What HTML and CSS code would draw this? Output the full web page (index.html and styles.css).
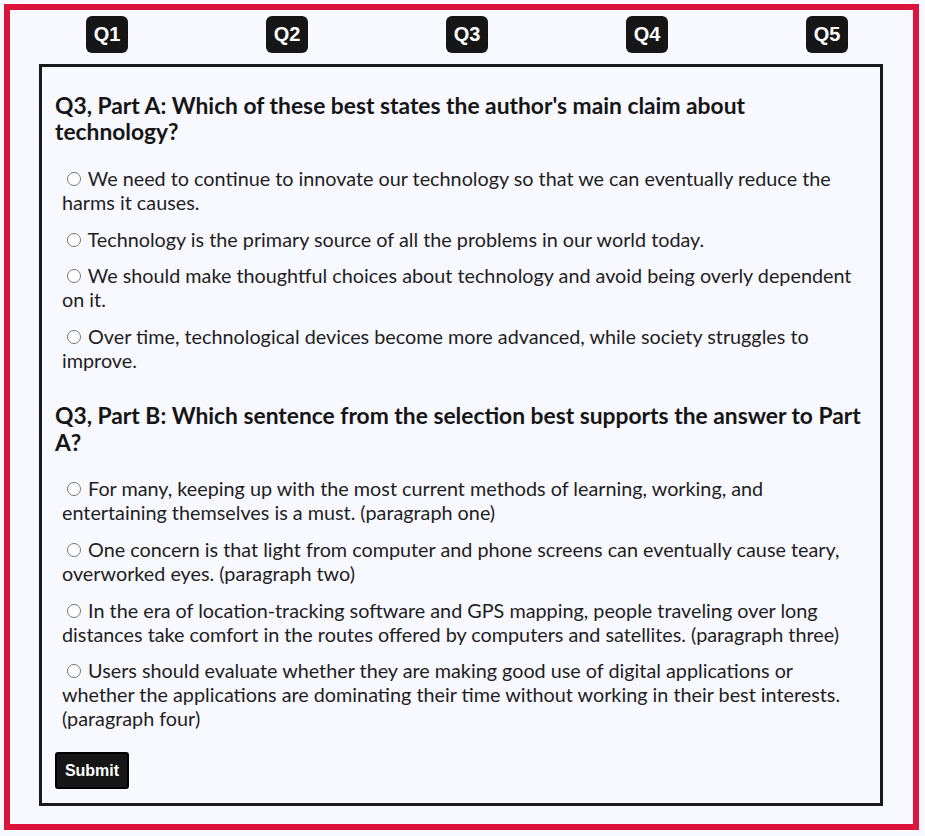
FILE: index.html
```html
<!DOCTYPE html>
<html lang="en">
<head>
<meta charset="utf-8">
<title>Q3</title>
<link rel="stylesheet" href="styles.css">
</head>
<body>
<div class="frame">
  <nav class="qnav">
    <button class="qbtn">Q1</button>
    <button class="qbtn">Q2</button>
    <button class="qbtn">Q3</button>
    <button class="qbtn">Q4</button>
    <button class="qbtn">Q5</button>
  </nav>
  <main class="card">
    <section class="q">
      <h2 class="q-title">Q3, Part A: Which of these best states the author's main claim about technology?</h2>
      <div class="options">
        <label class="opt"><input type="radio" name="partA"> We need to continue to innovate our technology so that we can eventually reduce the harms it causes.</label>
        <label class="opt"><input type="radio" name="partA"> Technology is the primary source of all the problems in our world today.</label>
        <label class="opt"><input type="radio" name="partA"> We should make thoughtful choices about technology and avoid being overly dependent on it.</label>
        <label class="opt"><input type="radio" name="partA"> Over time, technological devices become more advanced, while society struggles to improve.</label>
      </div>
    </section>
    <section class="q">
      <h2 class="q-title">Q3, Part B: Which sentence from the selection best supports the answer to Part A?</h2>
      <div class="options">
        <label class="opt"><input type="radio" name="partB"> For many, keeping up with the most current methods of learning, working, and entertaining themselves is a must. (paragraph one)</label>
        <label class="opt"><input type="radio" name="partB"> One concern is that light from computer and phone screens can eventually cause teary, overworked eyes. (paragraph two)</label>
        <label class="opt"><input type="radio" name="partB"> In the era of location-tracking software and GPS mapping, people traveling over long distances take comfort in the routes offered by computers and satellites. (paragraph three)</label>
        <label class="opt"><input type="radio" name="partB"> Users should evaluate whether they are making good use of digital applications or whether the applications are dominating their time without working in their best interests. (paragraph four)</label>
      </div>
    </section>
    <button class="submit">Submit</button>
  </main>
</div>
</body>
</html>
```
FILE: styles.css
```css
html, body {
  margin: 0;
  background: #f8f8ff;
}

body {
  padding: 4px 6px 6px 4px;
}

.frame {
  box-sizing: border-box;
  height: 826px;
  border: 6px solid #dc143c;
  padding-top: 6px;
}

.qnav {
  display: grid;
  grid-template-columns: repeat(5, 180px);
  justify-items: center;
  padding-left: 7px;
}

.qbtn {
  width: 42px;
  height: 37px;
  padding: 0;
  border: 0;
  border-radius: 6px;
  background: #161616;
  color: #fff;
  font: bold 20px "Liberation Sans", Arial, sans-serif;
}

.card {
  margin: 11px 30px 0 29px;
  border: 3px solid #1a1a1a;
  padding: 25px 13px 14px;
  display: flex;
  flex-direction: column;
  font-family: Lato, "Noto Sans", sans-serif;
  color: #1c1c1c;
}

.q {
  display: flex;
  flex-direction: column;
  gap: 21px;
}

.q + .q {
  margin-top: 30px;
}

.q-title {
  margin: 0;
  font-size: 22.8px;
  font-weight: 700;
  line-height: 26.4px;
  color: #151515;
}

.options {
  display: flex;
  flex-direction: column;
  gap: 12.8px;
  padding: 0 6px 0 7px;
}

.opt {
  display: block;
  font-size: 19.8px;
  line-height: 24px;
  color: #1e1e1e;
}

.opt input {
  width: 14px;
  height: 14px;
  margin: 3px 2px 0 5px;
}

.submit {
  align-self: flex-start;
  margin-top: 22px;
  width: 74px;
  height: 37px;
  padding: 0;
  border: 2px solid #000;
  border-radius: 3px;
  background: #161616;
  color: #fff;
  font: bold 16px "Liberation Sans", Arial, sans-serif;
}
```
